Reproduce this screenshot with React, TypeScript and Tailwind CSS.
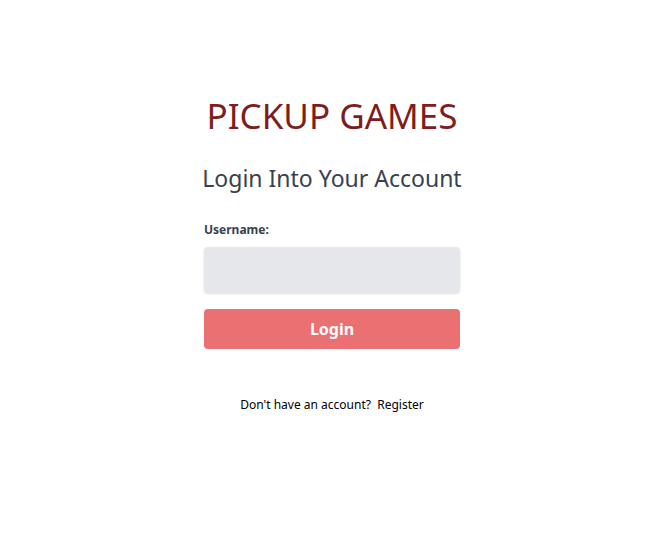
export default function App() {
  return (
    <div className="min-h-[542px] bg-white flex flex-col items-center pl-1 pt-[93px]" style={{ fontFamily: '"Noto Sans", "Open Sans", sans-serif' }}>
      <h1 className="text-[35px] leading-[46px] text-[#7f1d1d]">PICKUP GAMES</h1>
      <h2 className="mt-[24px] text-[23px] leading-[30px] text-[#374151]">Login Into Your Account</h2>
      <form className="mt-[29px] w-64 flex flex-col" onSubmit={(e) => e.preventDefault()}>
        <label className="text-xs font-bold text-[#374151] leading-4">Username:</label>
        <input type="text" className="mt-[9px] h-[46px] w-full rounded bg-[#e5e7eb] shadow-sm outline-none px-3" />
        <button type="submit" className="mt-4 h-10 w-full rounded bg-[#eb7072] text-white font-bold text-base">Login</button>
      </form>
      <p className="mt-[47px] text-[12px] text-black">
        Don't have an account?&nbsp;&nbsp;<a>Register</a>
      </p>
    </div>
  );
}
